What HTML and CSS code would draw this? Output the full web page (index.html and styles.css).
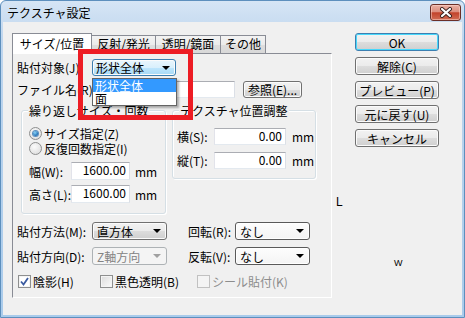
FILE: index.html
```html
<!DOCTYPE html>
<html lang="ja">
<head>
    <meta charset="UTF-8">
    <title>テクスチャ設定</title>
    <link rel="stylesheet" href="styles.css">
</head>
<body>
<div class="window">
    <div class="titlebar">
        <span class="title">テクスチャ設定</span>
        <div class="close-btn">
            <svg width="14" height="11" viewBox="0 0 14 11">
                <path d="M3 2 L11 9 M11 2 L3 9" stroke="#3a2320" stroke-width="4" stroke-linecap="round"/>
                <path d="M3 2 L11 9 M11 2 L3 9" stroke="#fff" stroke-width="2.2" stroke-linecap="round"/>
            </svg>
        </div>
    </div>

    <div class="client">
        <div class="tabs">
            <div class="tab-strip">
                <div class="tab active">サイズ/位置</div>
                <div class="tab w64">反射/発光</div>
                <div class="tab w65">透明/鏡面</div>
                <div class="tab w45">その他</div>
            </div>

            <div class="tab-page">
                <div class="row row-target">
                    <span class="lbl w75">貼付対象(J):</span>
                    <div class="combo combo-hot w84"><span>形状全体</span><i class="arrow"></i></div>
                </div>
                <div class="row row-file">
                    <span class="lbl w75">ファイル名(R):</span>
                    <div class="field w143"></div>
                    <div class="btn browse">参照(E)...</div>
                </div>

                <div class="groups">
                    <div class="group group-repeat">
                        <div class="legend">繰り返しサイズ・回数</div>
                        <div class="radio-row first"><span class="radio checked"></span>サイズ指定(Z)</div>
                        <div class="radio-row"><span class="radio"></span>反復回数指定(I)</div>
                        <div class="row size-row first">
                            <span class="lbl w42">幅(W):</span>
                            <div class="field num w59">1600.00</div>
                            <span class="unit">mm</span>
                        </div>
                        <div class="row size-row">
                            <span class="lbl w42">高さ(L):</span>
                            <div class="field num w59">1600.00</div>
                            <span class="unit">mm</span>
                        </div>
                    </div>

                    <div class="group group-offset">
                        <div class="legend">テクスチャ位置調整</div>
                        <div class="row offset-row first">
                            <span class="lbl w37">横(S):</span>
                            <div class="field num w72">0.00</div>
                            <span class="unit u6">mm</span>
                        </div>
                        <div class="row offset-row">
                            <span class="lbl w37">縦(T):</span>
                            <div class="field num w72">0.00</div>
                            <span class="unit u6">mm</span>
                        </div>
                    </div>
                </div>

                <div class="row combo-row first">
                    <span class="lbl w75">貼付方法(M):</span>
                    <div class="combo w75"><span>直方体</span><i class="arrow"></i></div>
                    <span class="lbl w47 gap21">回転(R):</span>
                    <div class="combo combo-white w75"><span>なし</span><i class="arrow"></i></div>
                </div>
                <div class="row combo-row">
                    <span class="lbl w75">貼付方向(D):</span>
                    <div class="combo disabled w75"><span>Z軸方向</span><i class="arrow"></i></div>
                    <span class="lbl w47 gap21">反転(V):</span>
                    <div class="combo combo-white w75"><span>なし</span><i class="arrow"></i></div>
                </div>

                <div class="row check-row">
                    <div class="check-item w82">
                        <span class="checkbox checked">
                            <svg width="11" height="11" viewBox="0 0 11 11"><path d="M2 5.5 L4.5 8.5 L9 2" fill="none" stroke="#3b5ba0" stroke-width="1.8"/></svg>
                        </span>陰影(H)
                    </div>
                    <div class="check-item w97"><span class="checkbox"></span>黒色透明(B)</div>
                    <div class="check-item disabled"><span class="checkbox"></span>シール貼付(K)</div>
                </div>
            </div>
        </div>

        <div class="side-buttons">
            <div class="btn default">OK</div>
            <div class="btn">解除(C)</div>
            <div class="btn">プレビュー(P)</div>
            <div class="btn">元に戻す(U)</div>
            <div class="btn">キャンセル</div>
        </div>
    </div>

    <!-- open drop list of 貼付対象 -->
    <div class="droplist">
        <div class="item selected">形状全体</div>
        <div class="item">面</div>
    </div>
    <div class="marker"></div>
    <span class="stray stray-l">L</span>
    <span class="stray stray-w">W</span>
</div>
</body>
</html>
```

FILE: styles.css
```css
body {
    margin: 0;
    font-family: "Noto Sans CJK JP", "Noto Sans CJK SC", sans-serif;
    font-size: 12px;
    color: #000;
    background: #fff;
}
.window {
    position: relative;
    width: 465px;
    height: 318px;
    box-sizing: border-box;
    border: 1px solid #5d8fbd;
    border-radius: 6px 6px 0 0;
    background: linear-gradient(#d6e5f5, #bfd6ee 12%, #a9cbeb 100%);
    display: flex;
    flex-direction: column;
    overflow: hidden;
}
.titlebar {
    height: 21px;
    flex: none;
    display: flex;
    justify-content: space-between;
    align-items: flex-start;
    padding: 0 3px 0 6px;
}
.title {
    margin-top: 3px;
    line-height: 18px;
}
.close-btn {
    margin-top: 3px;
    width: 31px;
    height: 17px;
    box-sizing: border-box;
    border: 1px solid #6b2f27;
    border-radius: 3px;
    background: linear-gradient(#eab0a3, #dc8f7f 45%, #c2432b 52%, #d16d55 100%);
    box-shadow: inset 0 0 0 1px rgba(255, 220, 210, 0.5);
    display: flex;
    align-items: center;
    justify-content: center;
}
.client {
    flex: 1;
    margin: 0 2px 2px;
    background: #f0f0f0;
    display: flex;
    padding: 11px 0 0 9px;
}

/* tabs */
.tabs {
    width: 320px;
}
.tab-strip {
    display: flex;
    align-items: flex-end;
    height: 20px;
}
.tab {
    height: 18px;
    box-sizing: border-box;
    border: 1px solid #898c95;
    border-left: none;
    border-bottom: none;
    background: linear-gradient(#f3f3f3, #ebebeb 50%, #dedede 51%, #d8d8d8);
    display: flex;
    align-items: center;
    justify-content: center;
    line-height: 13px;
    padding-bottom: 2px;
}
.tab.active {
    width: 80px;
    height: 21px;
    margin-bottom: -1px;
    border-left: 1px solid #898c95;
    background: #fff;
    position: relative;
    z-index: 1;
}
.tab-page {
    height: 245px;
    box-sizing: border-box;
    border: 1px solid #898c95;
    border-right-color: #fff;
    border-bottom-color: #fff;
    background: #f0f0f0;
    padding: 5px 0 0 4px;
}

/* rows */
.row {
    display: flex;
    align-items: center;
    height: 17px;
}
.row-file {
    margin-top: 5px;
}
.lbl {
    line-height: 13px;
    white-space: nowrap;
    flex: none;
}
.w37 { width: 37px; }
.w42 { width: 42px; }
.w45 { width: 45px; }
.w47 { width: 47px; }
.w59 { width: 59px; }
.w64 { width: 64px; }
.w65 { width: 65px; }
.w72 { width: 72px; }
.w75 { width: 75px; }
.w82 { width: 82px; }
.w84 { width: 84px; }
.w97 { width: 97px; }
.w143 { width: 143px; }
.gap21 { margin-left: 21px; }

.field {
    height: 100%;
    box-sizing: border-box;
    background: #fff;
    border: 1px solid;
    border-color: #abadb3 #dbdfe6 #e3e9ef #e2e3ea;
    line-height: 14px;
    flex: none;
}
.field.num {
    text-align: right;
    padding-right: 3px;
}
.unit {
    margin-left: 5px;
    line-height: 13px;
}
.unit.u6 {
    margin-left: 6px;
}

/* buttons */
.btn {
    height: 18px;
    box-sizing: border-box;
    border: 1px solid #707070;
    border-radius: 3px;
    background: linear-gradient(#f2f2f2, #ebebeb 50%, #dddddd 51%, #cfcfcf);
    box-shadow: inset 0 0 0 1px #fbfbfb;
    display: flex;
    align-items: center;
    justify-content: center;
    line-height: 13px;
    white-space: nowrap;
}
.btn.default {
    border-color: #3c7fb1;
    box-shadow: inset 0 0 0 1px #48d8fb;
}
.browse {
    width: 59px;
    margin-left: 8px;
    height: 17px;
}
.side-buttons {
    width: 84px;
    margin-left: 23px;
    display: flex;
    flex-direction: column;
    gap: 6px;
}

/* combos */
.combo {
    height: 100%;
    box-sizing: border-box;
    border: 1px solid #707070;
    border-radius: 3px;
    background: linear-gradient(#f2f2f2, #ebebeb 50%, #dddddd 51%, #cfcfcf);
    box-shadow: inset 0 0 0 1px #fbfbfb;
    display: flex;
    align-items: center;
    justify-content: space-between;
    padding: 0 5px 0 4px;
    line-height: 13px;
    flex: none;
}
.combo-hot {
    border-color: #3c7fb1;
    background: linear-gradient(#eaf6fd, #d9f0fc 50%, #bee6fd 51%, #a7d9f5);
    padding-left: 3px;
}
.combo-white {
    border-color: #5a5a5a;
    background: linear-gradient(#fdfdfd, #f4f4f4);
    box-shadow: inset 0 0 0 1px #ffffff;
}
.combo.disabled {
    border-color: #adb2b5;
    background: #f4f4f4;
    box-shadow: none;
    color: #838383;
}
.arrow {
    width: 0;
    height: 0;
    border-left: 4px solid transparent;
    border-right: 4px solid transparent;
    border-top: 4px solid #000;
}
.combo.disabled .arrow {
    border-top-color: #a0a0a0;
}

/* group boxes */
.groups {
    display: flex;
    align-items: flex-start;
    margin: 12px 0 0 4px;
}
.group {
    box-sizing: border-box;
    border: 1px solid #d5dfe5;
    border-radius: 3px;
    box-shadow: 1px 1px 0 #fff, inset 1px 1px 0 #fff;
}
.group-repeat {
    width: 145px;
    height: 104px;
    padding-left: 7px;
}
.group-offset {
    width: 144px;
    height: 69px;
    margin-left: 6px;
    padding-left: 4px;
}
.legend {
    width: fit-content;
    margin: -7px 0 0 -1px;
    padding: 0 1px;
    background: #f0f0f0;
    line-height: 13px;
}
.group-offset .legend {
    margin-left: 2px;
}
.radio-row {
    display: flex;
    align-items: center;
    height: 15px;
    line-height: 13px;
}
.radio-row.first {
    margin-top: 9px;
}
.radio {
    width: 13px;
    height: 13px;
    box-sizing: border-box;
    border: 1px solid #8e8f8f;
    border-radius: 50%;
    background: radial-gradient(circle at 40% 35%, #fbfbfb, #d8d8d8);
    margin-right: 2px;
    display: flex;
    align-items: center;
    justify-content: center;
}
.radio.checked::after {
    content: "";
    width: 5px;
    height: 5px;
    border-radius: 50%;
    background: radial-gradient(circle at 40% 35%, #8ad4f8, #1f6fb5 70%, #0e4a86);
    box-shadow: 0 0 0 1px #5b8fbf;
}
.size-row {
    height: 18px;
    margin-top: 5px;
}
.size-row.first {
    margin-top: 6px;
}
.offset-row {
    margin-top: 7px;
}
.offset-row.first {
    margin-top: 11px;
}

.combo-row {
    height: 18px;
    margin-top: 7px;
}
.combo-row.first {
    margin-top: 8px;
}

/* check boxes */
.check-row {
    height: 13px;
    margin-top: 10px;
    padding-left: 1px;
}
.check-item {
    display: flex;
    align-items: center;
    line-height: 13px;
    flex: none;
}
.checkbox {
    width: 13px;
    height: 13px;
    box-sizing: border-box;
    border: 1px solid #8e8f8f;
    background: linear-gradient(135deg, #dcdcdc, #fbfbfb);
    box-shadow: inset 0 0 0 1px #f4f4f4;
    margin-right: 2px;
    display: flex;
    align-items: center;
    justify-content: center;
}
.checkbox.checked {
    background: #fff;
}
.check-item.disabled {
    color: #8d8d8d;
}
.check-item.disabled .checkbox {
    border-color: #c1c1c1;
    background: #f4f4f4;
    box-shadow: none;
}

/* overlays */
.droplist {
    position: absolute;
    left: 91px;
    top: 77px;
    width: 85px;
    box-sizing: border-box;
    border: 1px solid #646464;
    background: #fff;
    box-shadow: 2px 2px 2px rgba(0, 0, 0, 0.3);
    z-index: 5;
}
.droplist .item {
    height: 13px;
    line-height: 13px;
    padding-left: 2px;
}
.droplist .item.selected {
    background: #3399ff;
    color: #fff;
}
.marker {
    position: absolute;
    left: 77px;
    top: 48px;
    width: 115px;
    height: 71px;
    box-sizing: border-box;
    border: 5px solid #ed1c24;
    z-index: 6;
}
.stray {
    position: absolute;
    line-height: 12px;
    font-family: "Liberation Sans", sans-serif;
}
.stray-l {
    left: 335px;
    top: 195px;
    font-size: 12px;
}
.stray-w {
    left: 393px;
    top: 256px;
    font-size: 9px;
}
```
